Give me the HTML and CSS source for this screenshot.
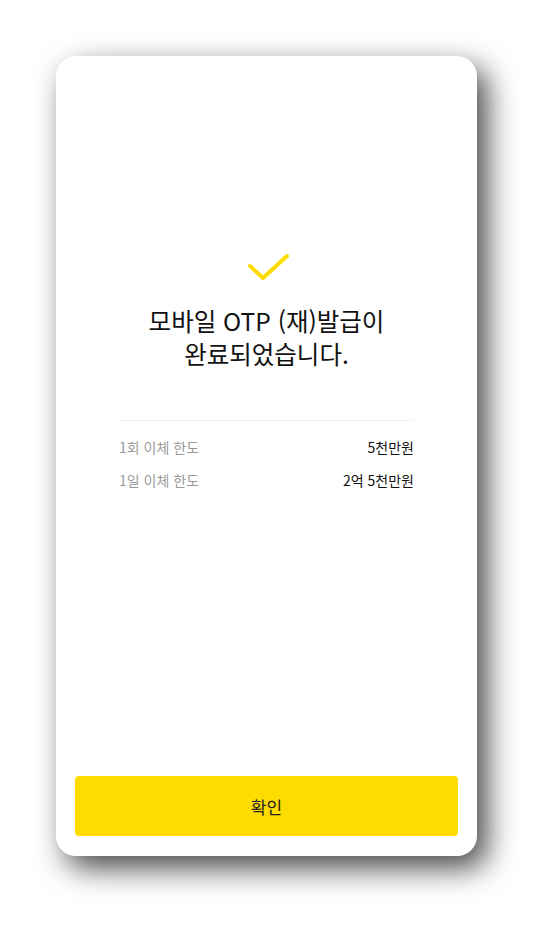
FILE: index.html
```html
<!DOCTYPE html>
<html lang="ko">
<head>
  <meta charset="UTF-8" />
  <meta name="viewport" content="width=device-width, initial-scale=1" />
  <title>모바일 OTP (재)발급 완료</title>
  <link rel="stylesheet" href="styles.css">
</head>
<body>
  <div class="card">
    <div class="done">
      <svg class="check" width="44" height="32" viewBox="0 0 44 32">
        <path d="M3 14 L16 26 L40 4" fill="none" stroke="#ffdc00" stroke-width="4" stroke-linecap="round" stroke-linejoin="round"/>
      </svg>
      <h2 class="title">모바일 OTP (재)발급이<br>완료되었습니다.</h2>
    </div>
    <div class="limits">
      <div class="row">
        <span class="label">1회 이체 한도</span>
        <span class="value">5천만원</span>
      </div>
      <div class="row">
        <span class="label">1일 이체 한도</span>
        <span class="value">2억 5천만원</span>
      </div>
    </div>
    <button class="ok">확인</button>
  </div>
</body>
</html>
```

FILE: styles.css
```css
body {
  margin: 0;
  padding: 56px 0 70px 56px;
  background: #fff;
  font-family: "Noto Sans CJK KR", "Noto Sans", sans-serif;
  color: #111;
}
.card {
  width: 421px;
  height: 800px;
  box-sizing: border-box;
  padding: 0 19px 20px;
  background: #fff;
  border-radius: 20px;
  box-shadow: 10px 12px 30px rgba(0,0,0,0.72);
  display: flex;
  flex-direction: column;
}
.done {
  padding-top: 196px;
  display: flex;
  flex-direction: column;
  align-items: center;
}
.check {
  display: block;
  margin-left: 5px;
}
.title {
  margin: 20px 0 0;
  font-size: 24.5px;
  font-weight: 400;
  line-height: 33px;
  text-align: center;
}
.limits {
  margin: 50px 44px 0;
  border-top: 1px solid #f2f2f2;
  padding-top: 16px;
  display: flex;
  flex-direction: column;
  gap: 13px;
}
.row {
  display: flex;
  justify-content: space-between;
  font-size: 14px;
  line-height: 20px;
}
.label {
  color: #9a9a9a;
}
.value {
  color: #111;
}
.ok {
  margin-top: auto;
  height: 60px;
  border: none;
  border-radius: 4px;
  background: #ffdc00;
  color: #222;
  font-family: inherit;
  font-size: 17px;
  cursor: pointer;
}
```
